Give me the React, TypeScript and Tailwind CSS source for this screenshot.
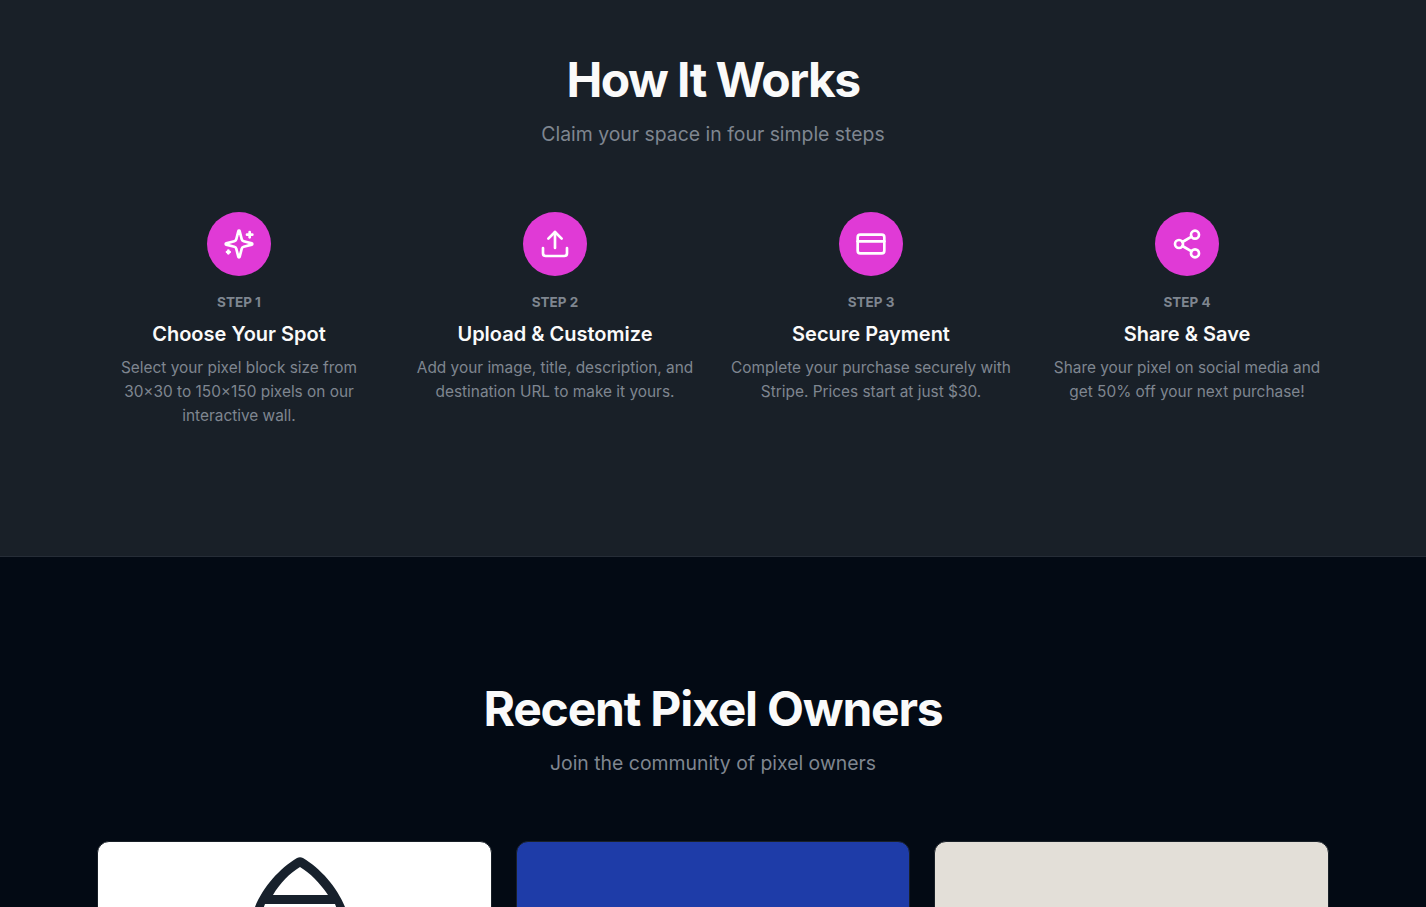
import React from 'react';
import { Upload, CreditCard, Share2 } from 'lucide-react';

// lucide's older sparkles: the small mark bottom-left is a plus, not a ring
const SparklesIcon: React.FC<{ size?: number; strokeWidth?: number }> = ({ size = 24, strokeWidth = 2 }) => (
  <svg
    width={size}
    height={size}
    viewBox="0 0 24 24"
    fill="none"
    stroke="currentColor"
    strokeWidth={strokeWidth}
    strokeLinecap="round"
    strokeLinejoin="round"
  >
    <path d="M9.937 15.5A2 2 0 0 0 8.5 14.063l-6.135-1.582a.5.5 0 0 1 0-.962L8.5 9.936A2 2 0 0 0 9.937 8.5l1.582-6.135a.5.5 0 0 1 .963 0L14.063 8.5A2 2 0 0 0 15.5 9.937l6.135 1.581a.5.5 0 0 1 0 .964L15.5 14.063a2 2 0 0 0-1.437 1.437l-1.582 6.135a.5.5 0 0 1-.963 0z" />
    <path d="M20 3v4" />
    <path d="M22 5h-4" />
    <path d="M4 17v2" />
    <path d="M5 18H3" />
  </svg>
);

const steps = [
  {
    icon: SparklesIcon,
    label: 'STEP 1',
    title: 'Choose Your Spot',
    text: 'Select your pixel block size from 30×30 to 150×150 pixels on our interactive wall.',
  },
  {
    icon: Upload,
    label: 'STEP 2',
    title: 'Upload & Customize',
    text: 'Add your image, title, description, and destination URL to make it yours.',
  },
  {
    icon: CreditCard,
    label: 'STEP 3',
    title: 'Secure Payment',
    text: 'Complete your purchase securely with Stripe. Prices start at just $30.',
  },
  {
    icon: Share2,
    label: 'STEP 4',
    title: 'Share & Save',
    text: 'Share your pixel on social media and get 50% off your next purchase!',
  },
];

const App: React.FC = () => {
  return (
    <div className="h-screen overflow-hidden bg-[#030a14] font-['Inter',sans-serif]">
      <section className="bg-[#192028] pt-14 pb-32 border-b border-[#262d37]">
        <div className="max-w-7xl mx-auto px-6">
          <div className="text-center mb-16">
            <h2 className="text-5xl font-bold tracking-[-1.55px] text-[#fafafa]">How It Works</h2>
            <p className="mt-4 text-[19.4px] leading-7 text-[#7f8690]">Claim your space in four simple steps</p>
          </div>
          <div className="grid grid-cols-4 gap-8">
            {steps.map((step) => {
              const Icon = step.icon;
              return (
                <div key={step.label} className="flex flex-col items-center text-center">
                  <div className="w-16 h-16 rounded-full bg-[#e03ad6] flex items-center justify-center mb-4 text-white">
                    <Icon size={32} strokeWidth={2} />
                  </div>
                  <div className="text-[13.5px] leading-5 font-bold text-[#7f8690]">{step.label}</div>
                  <h3 className="mt-2 text-xl font-semibold text-[#fafafa]">{step.title}</h3>
                  <p className="mt-2 text-[15.4px] leading-6 text-[#7f8690]">{step.text}</p>
                </div>
              );
            })}
          </div>
        </div>
      </section>

      <section className="pt-32">
        <div className="max-w-7xl mx-auto px-6">
          <div className="text-center mb-16">
            <h2 className="text-5xl font-bold tracking-tight text-[#fafafa]">Recent Pixel Owners</h2>
            <p className="mt-4 text-[19.4px] leading-7 text-[#7f8690]">Join the community of pixel owners</p>
          </div>
          <div className="grid grid-cols-3 gap-6">
            <div className="h-[300px] rounded-xl border border-[#192028] bg-white flex justify-center pt-[15px] pl-[12px]">
              <svg width="100" height="60" viewBox="0 0 100 60" className="shrink-0">
                <path
                  fillRule="evenodd"
                  fill="#17212c"
                  d="M47 1 Q50 -0.5 53 1 C70 11 87 30 95 50 L99 60 H1 L5 50 C13 30 30 11 47 1Z M50 10 C60 16 70 26 78 38 H23 C30 26 40 16 50 10Z M15 47 H85 L90 60 H10Z"
                />
              </svg>
            </div>
            <div className="h-[300px] rounded-xl border border-[#192028] bg-[#1e3ca8]" />
            <div className="h-[300px] rounded-xl border border-[#192028] bg-[#e3dfd8]" />
          </div>
        </div>
      </section>
    </div>
  );
};

export default App;
